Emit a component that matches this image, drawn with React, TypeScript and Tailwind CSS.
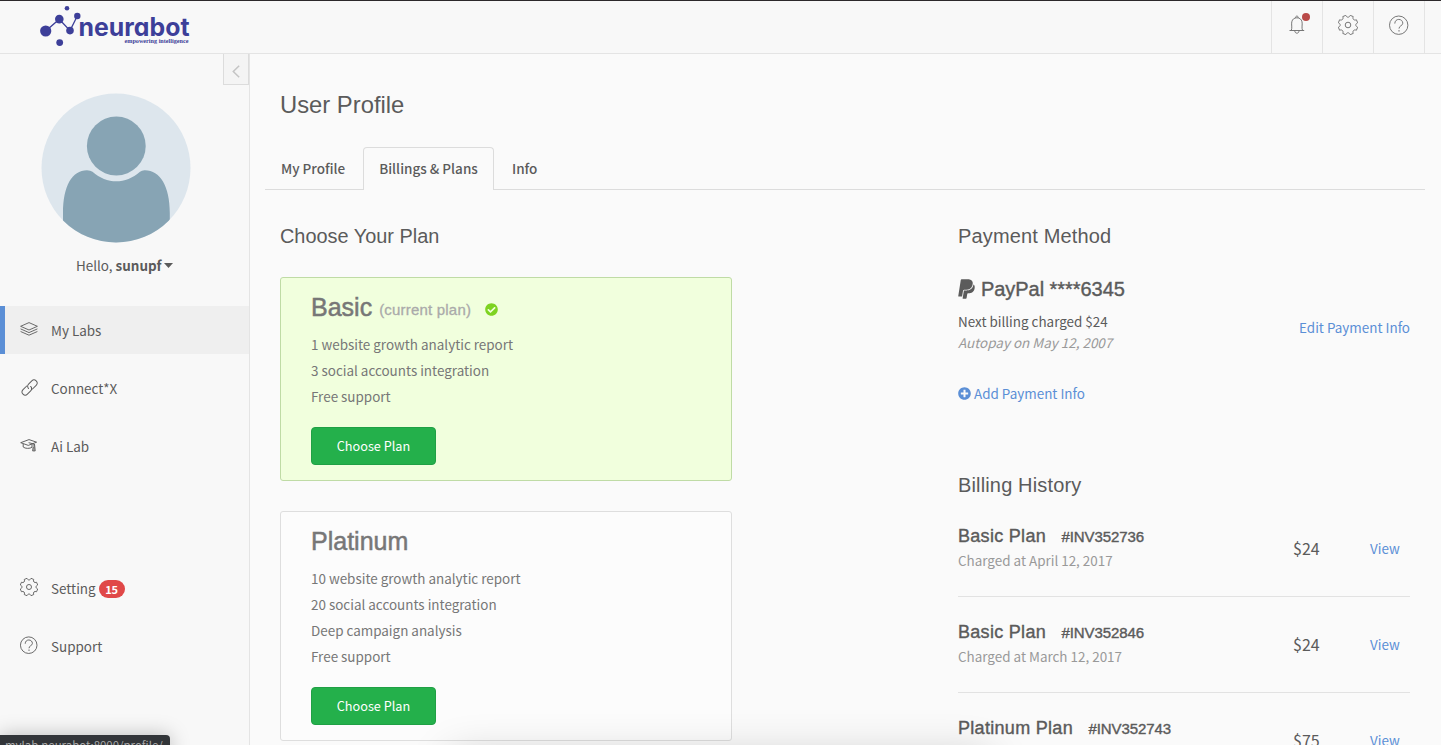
import React from "react";
import { FaPaypal, FaCheckCircle, FaPlusCircle } from "react-icons/fa";

const sans = "font-['Noto_Sans_CJK_SC',sans-serif]";
const helv = "font-['Liberation_Sans',Arial,sans-serif]";

function gearPath() {
  const point = (deg: number, r: number) => {
    const a = (deg * Math.PI) / 180;
    return `${(10 + r * Math.cos(a)).toFixed(2)} ${(10 + r * Math.sin(a)).toFixed(2)}`;
  };
  let d = `M${point(13, 9.9)}`;
  for (let i = 0; i < 8; i++) {
    const start = i * 45 + 13;
    d += ` L${point(start + 19, 9.9)} C${point(start + 22, 7.3)} ${point(start + 42, 7.3)} ${point(start + 45, 9.9)}`;
  }
  return d + " Z";
}

function Gear({ size }: { size: number }) {
  return (
    <svg width={size} height={size} viewBox="0 0 20 20" fill="none" stroke="currentColor" strokeWidth="1" strokeLinejoin="round">
      <path d={gearPath()} />
      <circle cx="10" cy="10" r="2.8" />
    </svg>
  );
}

function Help({ size }: { size: number }) {
  return (
    <svg width={size} height={size} viewBox="0 0 20 20" fill="none" stroke="currentColor" strokeWidth="1">
      <circle cx="9.7" cy="10.2" r="9.2" />
      <path d="M5.8 8.6 C5.8 6 7.6 4.4 9.8 4.4 S13.8 6.1 13.8 8.2 C13.8 10.8 10 10.6 10 13.6 M10 15 V16.6" />
    </svg>
  );
}

function Bell() {
  return (
    <svg width="16" height="20" viewBox="0 0 16 20" fill="none" stroke="currentColor" strokeWidth="1">
      <path d="M.5 15.5 H15.2 M2.3 15.4 C3.4 12.8 2.2 9.4 2.8 6.8 C3.4 4.2 5.2 2.8 7.9 2.8 S12.4 4.2 13 6.8 C13.6 9.4 12.4 12.8 13.5 15.4 M6.6 2.9 C6.2 .5 9.6 .5 9.2 2.9 M5.8 15.8 C5.8 19 10 19 10 15.8" />
    </svg>
  );
}

function Layers() {
  return (
    <svg width="18" height="14" viewBox="0 0 18 14" fill="none" stroke="currentColor" strokeWidth=".9" strokeLinejoin="round">
      <path d="M9 .6 L17.4 4.3 L9 8 L.6 4.3 Z M.6 6.9 L9 10.6 L17.4 6.9 M.6 9.5 L9 13.2 L17.4 9.5" />
    </svg>
  );
}

function Chain() {
  return (
    <svg width="18" height="17" viewBox="0 0 18 17" fill="none" stroke="currentColor" strokeWidth=".95" strokeLinecap="round">
      <g transform="translate(9.6 8.5) rotate(-45)">
        <path d="M-1 -3.1 H-6.2 A3.1 3.1 0 0 0 -6.2 3.1 H-1.6 A3.1 3.1 0 0 0 1.5 0" />
        <path d="M1 3.1 H6.2 A3.1 3.1 0 0 0 6.2 -3.1 H1.6 A3.1 3.1 0 0 0 -1.5 0" />
      </g>
    </svg>
  );
}

function Cap() {
  return (
    <svg width="18" height="13" viewBox="0 0 18 13" fill="none" stroke="currentColor" strokeWidth=".95" strokeLinejoin="round">
      <path d="M.7 3.7 L9 .6 L16.6 3.2 L8.3 6.4 Z M3.2 5 V8 C5 9.8 10.2 9.8 12 8.2 V5.2 M8.6 3.7 L14 5 V11.8 M13.2 8 L12.6 11.9 H15.2 L14.5 5" />
    </svg>
  );
}

function Logo() {
  return (
    <svg width="156" height="48" viewBox="0 0 156 48" fill="#3d3f99" overflow="visible">
      <path d="M5.7 27 L19.3 15.2 L30 26.6 L37.3 12" fill="none" stroke="#3d3f99" strokeWidth="1.3" />
      <circle cx="5.7" cy="27" r="5.6" />
      <circle cx="19.3" cy="15.1" r="4.3" />
      <circle cx="30" cy="26.6" r="3.8" />
      <circle cx="37.3" cy="12" r="3.2" />
      <circle cx="27" cy="4.3" r="2.3" />
      <circle cx="19.7" cy="38.6" r="3.4" />
      <text className="font-['Inter'] font-bold [font-feature-settings:'cv11']" x="38.5" y="31.6" fontSize="25" textLength="111" lengthAdjust="spacingAndGlyphs">neurabot</text>
      <text className="font-['Liberation_Serif'] font-bold" x="84.5" y="39.2" fontSize="6.8" textLength="64" lengthAdjust="spacingAndGlyphs">empowering intelligence</text>
    </svg>
  );
}

function NavItem({ icon, label, active, badge }: { icon: React.ReactNode; label: string; active?: boolean; badge?: string }) {
  return (
    <a className={`flex h-12 items-center border-l-[5px] pl-[15px] ${active ? "border-[#5b8fd6] bg-[#efefef]" : "border-transparent"}`}>
      <span className="flex w-[31px] items-center pb-[2px]">{icon}</span>
      <span className="leading-5">{label}</span>
      {badge && <span className="ml-[3px] mt-0.5 flex h-[18px] w-[26px] items-center justify-center rounded-full bg-[#e04848] text-[11px] font-bold text-white">{badge}</span>}
    </a>
  );
}

function Plan({ name, features, current }: { name: string; features: string[]; current?: boolean }) {
  return (
    <section className={`w-[452px] rounded-[3px] border pl-[30px] pb-[15px] ${current ? "border-[#bfdba5] bg-[#f1ffdd]" : "border-[#dedede] bg-[#fcfcfc]"}`}>
      <h3 className={`${helv} flex h-[53px] items-start pt-[13px] text-[25px] leading-8 text-[#777] [-webkit-text-stroke:0.5px_#777]`}>
        {name}
        {current && (
          <>
            <span className="ml-[7px] mt-[3px] text-[15px] tracking-[0.2px] text-[#aaa] [-webkit-text-stroke:0.3px_#aaa]">(current plan)</span>
            <FaCheckCircle className="ml-[14px] mt-3 text-[13px] text-[#7ed321] [stroke-width:0]" />
          </>
        )}
      </h3>
      <ul className="leading-[26px] text-[#777]">
        {features.map((f) => (
          <li key={f}>{f}</li>
        ))}
      </ul>
      <button className="mt-[18px] block h-[38px] w-[125px] rounded-[4px] border border-[#20a045] bg-[#24b04b] text-[12.7px] text-white">Choose Plan</button>
    </section>
  );
}

const invoices = [
  { plan: "Basic Plan", id: "#INV352736", date: "April 12, 2017", price: "$24" },
  { plan: "Basic Plan", id: "#INV352846", date: "March 12, 2017", price: "$24" },
  { plan: "Platinum Plan", id: "#INV352743", date: "February 12, 2017", price: "$75" },
];

export default function App() {
  return (
    <div className={`${sans} relative flex h-[745px] w-[1441px] flex-col overflow-hidden bg-[#fafafa] text-[13.45px] text-[#5b5b5b]`}>
      <header className="flex h-[54px] shrink-0 justify-between border-b border-t border-b-[#e4e4e4] border-t-[#2c292b] bg-[#f8f8f8]">
        <div className="pl-10 pt-[3px]"><Logo /></div>
        <div className="mr-4 flex border-r border-[#e4e4e4] text-[#777]">
          <div className="relative flex w-[51px] justify-center border-l border-[#e4e4e4] pt-[14px]">
            <Bell />
            <span className="absolute left-[30px] top-3 size-2 rounded-full bg-[#b94a48]" />
          </div>
          <div className="flex w-[51px] justify-center border-l border-[#e4e4e4] pt-[14px]"><Gear size={20} /></div>
          <div className="flex w-[51px] justify-center border-l border-[#e4e4e4] pt-[14px]"><Help size={20} /></div>
        </div>
      </header>
      <div className="flex min-h-0 grow">
        <aside className="w-[250px] shrink-0 border-r border-[#e4e4e4] bg-[#f8f8f8]">
          <div className="flex h-[31px] justify-end">
            <button className="flex w-[26px] items-center justify-center border border-t-0 border-[#dcdcdc] bg-[#f4f4f4] pt-1">
              <svg width="8" height="13" viewBox="0 0 8 13" fill="none" stroke="#c4c4c4" strokeWidth="1.5"><path d="M7.2 .8 L1.3 6.5 L7.2 12.2" /></svg>
            </button>
          </div>
          <svg className="ml-[41px] mt-2" width="150" height="150" viewBox="0 0 150 150">
            <clipPath id="avatar"><circle cx="75" cy="75" r="74.5" /></clipPath>
            <g clipPath="url(#avatar)">
              <rect width="150" height="150" fill="#dde6ed" />
              <circle cx="75.3" cy="53" r="29.4" fill="#87a4b4" />
              <path d="M22 150 V120 C22 93 31 77.2 46 77.2 Q49.5 77.2 51.5 78.8 C66 91.5 84.5 91.5 99 78.8 Q101 77 104 77.2 C119 77.2 128.8 93 128.8 120 V150 Z" fill="#87a4b4" />
            </g>
          </svg>
          <p className="ml-[76px] mt-3 flex h-5 items-center">
            Hello,&nbsp;<b>sunupf</b>
            <svg className="ml-[2px]" width="9" height="5" viewBox="0 0 9 5" fill="currentColor"><path d="M0 0 H9 L4.5 5 Z" /></svg>
          </p>
          <nav className="mt-[31px] flex flex-col gap-[10px]">
            <NavItem icon={<Layers />} label="My Labs" active />
            <NavItem icon={<Chain />} label="Connect*X" />
            <NavItem icon={<Cap />} label="Ai Lab" />
          </nav>
          <nav className="mt-[94px] flex flex-col gap-[10px]">
            <NavItem icon={<Gear size={18} />} label="Setting" badge="15" />
            <NavItem icon={<Help size={18} />} label="Support" />
          </nav>
        </aside>
        <main className="min-w-0 grow pl-[15px] pr-4">
          <h1 className={`${helv} ml-[15px] mt-[35px] h-[58px] text-[23.8px] leading-8`}>User Profile</h1>
          <div className="flex h-[43px] text-[13.5px] font-medium">
            <a className="flex w-[98px] items-center border-b border-[#dcdcdc] pl-4">My Profile</a>
            <a className="flex w-[131px] items-center justify-center rounded-t-[4px] border border-b-0 border-[#dcdcdc] pb-[2px]">Billings &amp; Plans</a>
            <a className="flex grow items-center border-b border-[#dcdcdc] pl-[18px]">Info</a>
          </div>
          <div className="ml-[15px] mr-[15px] flex justify-between">
            <div>
              <h2 className={`${helv} mt-[34px] h-[53px] text-[19.9px] leading-6`}>Choose Your Plan</h2>
              <div className="flex flex-col gap-[30px]">
                <Plan name="Basic" current features={["1 website growth analytic report", "3 social accounts integration", "Free support"]} />
                <Plan name="Platinum" features={["10 website growth analytic report", "20 social accounts integration", "Deep campaign analysis", "Free support"]} />
              </div>
            </div>
            <div className="w-[452px]">
              <h2 className={`${helv} mt-[34px] h-[53px] text-[20px] leading-6 tracking-[0.15px]`}>Payment Method</h2>
              <div className="flex h-[105px] justify-between">
                <div>
                  <h3 className={`${helv} flex h-6 items-center gap-[6px] text-[20px] tracking-[-0.05px] [-webkit-text-stroke:0.4px_#5b5b5b]`}>
                    <FaPaypal className="w-[17px] text-[22px] [stroke-width:0]" />PayPal ****6345
                  </h3>
                  <p className="mt-[10px] h-[21px] leading-[21px]">Next billing charged $24</p>
                  <p className="italic leading-[21px] text-[#999]">Autopay on May 12, 2007</p>
                </div>
                <a className="mt-10 h-5 leading-5 text-[#5b8fd6]">Edit Payment Info</a>
              </div>
              <a className="flex h-[22px] items-center gap-[3px] text-[#5b8fd6]"><FaPlusCircle className="text-[13px]" />Add Payment Info</a>
              <h2 className={`${helv} mt-[69px] h-7 text-[20px] leading-6 tracking-[0.15px]`}>Billing History</h2>
              {invoices.map((v) => (
                <div key={v.id} className="flex h-24 items-center border-b border-[#e2e2e2]">
                  <div className="w-[335px]">
                    <h4 className={`${helv} flex h-6 items-baseline gap-[15.5px] text-[18px] leading-[25px] tracking-[0.3px] [-webkit-text-stroke:0.4px_#5b5b5b]`}>
                      {v.plan}<span className="text-[15px] tracking-[-0.1px]">{v.id}</span>
                    </h4>
                    <p className="pb-px leading-[25px] text-[#999]">Charged at {v.date}</p>
                  </div>
                  <span className="w-[77px] pb-px text-base leading-6">{v.price}</span>
                  <a className="text-[#5b8fd6]">View</a>
                </div>
              ))}
            </div>
          </div>
        </main>
      </div>
      <div className="absolute left-[450px] top-[756px] h-10 w-[540px] shadow-[0_0_44px_rgba(0,0,0,0.2)]" />
      <div className="absolute left-0 top-[735px] h-6 w-[170px] overflow-hidden rounded-tr-[4px] bg-[#323539] pl-[5px] pt-[2px] text-[11.45px] leading-4 text-[#aaa] shadow-[0_0_20px_rgba(0,0,0,0.25)]">mylab.neurabot:8000/profile/</div>
    </div>
  );
}
